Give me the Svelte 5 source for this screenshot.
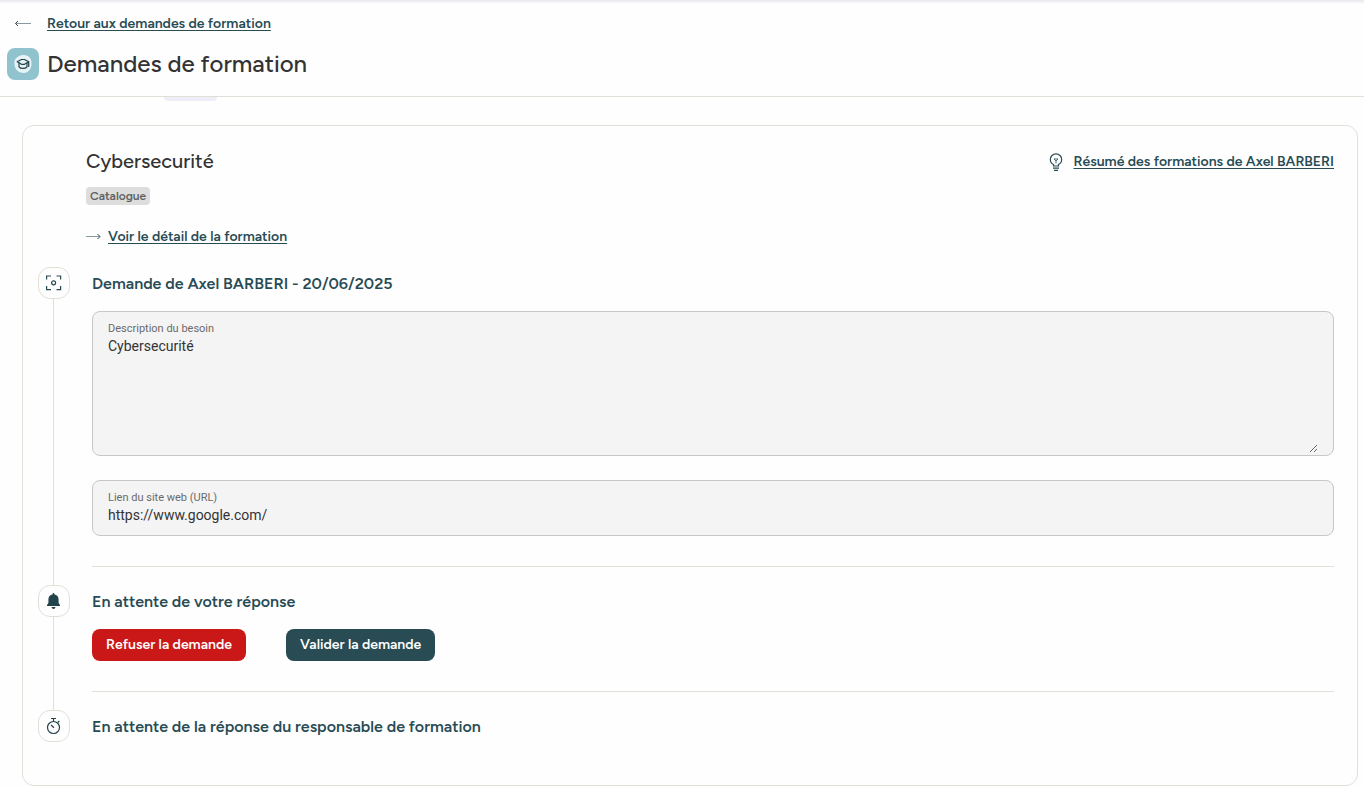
<script lang="ts">
  const person = 'Axel BARBERI';
  const requestDate = '20/06/2025';

  let description = $state('Cybersecurité');
  let url = $state('https://www.google.com/');
</script>

<div class="page">
  <header class="page-header">
    <a class="link back" href="#demandes">
      <svg class="arrow" width="18" height="10" viewBox="0 0 18 10" aria-hidden="true">
        <path d="M1.5 4.500H17" stroke="#8a9a9e" />
        <path d="M4 2L1.5 4.500L4 7" stroke="#284b54" />
      </svg>
      <span>Retour aux demandes de formation</span>
    </a>
    <div class="heading">
      <span class="logo">
        <svg width="20" height="20" viewBox="0 0 20 20" aria-hidden="true">
          <path d="M10 1C15 .7 18.800 4 18.500 9C18.800 14 16 18.500 11 19C5.500 19.200 1.800 15.500 1.500 10C.5 5.500 4.500 1.500 10 1Z" fill="#e6f3f6" />
          <g fill="none" stroke="#22434b" stroke-width="1.200" stroke-linejoin="round" stroke-linecap="round">
            <path d="M4.200 7.800L8.500 5.500H11.500L15.700 7.800L11.500 10.300H8.500Z" />
            <path d="M6 9.200V12.800C7.500 15 12.500 15 14 12.800V9.200M15.700 7.800V12.500" />
          </g>
        </svg>
      </span>
      <h1>Demandes de formation</h1>
    </div>
  </header>

  <main>
    <span class="scrolled-tag"></span>

    <section class="card">
      <div class="card-head">
        <div class="training">
          <h2>Cybersecurité</h2>
          <span class="tag">Catalogue</span>
          <a class="link detail" href="#formation">
            <svg class="arrow" width="15" height="10" viewBox="0 0 15 10" aria-hidden="true">
              <path d="M0 4.500H14" stroke="#8a9a9e" />
              <path d="M11.500 2L14 4.500L11.500 7" stroke="#284b54" />
            </svg>
            <span>Voir le détail de la formation</span>
          </a>
        </div>
        <a class="link summary" href="#resume">
          <svg width="14" height="18" viewBox="0 0 14 18" fill="none" stroke="#284b54" aria-hidden="true">
            <path d="M4.500 13V11.500C2.300 10.500 1.300 8.700 1.300 6.500A5.700 5.700 0 0 1 12.700 6.500C12.700 8.700 11.700 10.500 9.500 11.500V13Z" stroke-width="1.200" />
            <path d="M5 6H9L7 8ZM7 8V10.500" stroke-width=".8" />
            <path d="M4 15.200H10M5 17.400H9" stroke-width="1.200" />
          </svg>
          <span>Résumé des formations de {person}</span>
        </a>
      </div>

      <ol class="steps">
        <li class="step">
          <div class="rail">
            <span class="marker">
              <svg width="16" height="16" viewBox="0 0 16 16" fill="none" stroke="#284b54" stroke-width="1.200" aria-hidden="true">
                <path d="M.6 4.600V1H5M10.500 1H14.600V4.600M14.600 11V14.600H10.500M5 14.600H.6V11" />
                <circle cx="7.600" cy="7.800" r="2" />
              </svg>
            </span>
          </div>
          <div class="body">
            <h3>Demande de {person} - {requestDate}</h3>
            <div class="field">
              <label for="description">Description du besoin</label>
              <textarea id="description" bind:value={description} readonly></textarea>
            </div>
            <div class="field">
              <label for="url">Lien du site web (URL)</label>
              <input id="url" type="text" bind:value={url} readonly />
            </div>
          </div>
        </li>

        <li class="step">
          <div class="rail">
            <span class="marker">
              <svg width="14" height="16" viewBox="0 0 14 16" fill="#22434b" aria-hidden="true">
                <path d="M5.800 0H7.200V1.300C10 1.800 11.600 3.800 11.600 6.500V10L13 12V13H0V12L1.400 10V6.500C1.400 3.800 3 1.800 5.800 1.300Z" />
                <path d="M4.500 14H8.500C8.200 15.300 7.500 16 6.500 16S4.800 15.300 4.500 14Z" />
              </svg>
            </span>
          </div>
          <div class="body">
            <h3>En attente de votre réponse</h3>
            <div class="actions">
              <button type="button" class="btn btn--refuse">Refuser la demande</button>
              <button type="button" class="btn btn--accept">Valider la demande</button>
            </div>
          </div>
        </li>

        <li class="step">
          <div class="rail">
            <span class="marker">
              <svg width="16" height="18" viewBox="0 0 16 18" fill="none" stroke="#22434b" stroke-width="1.200" aria-hidden="true">
                <circle cx="7.500" cy="10.500" r="6" />
                <path d="M5 1.500H10M7.500 1.500V4.500M11.800 5.500L13.300 4M5 8L8 10.800" />
              </svg>
            </span>
          </div>
          <div class="body">
            <h3>En attente de la réponse du responsable de formation</h3>
          </div>
        </li>
      </ol>
    </section>
  </main>
</div>

<style>
  :global(body) {
    background: #fefefe;
  }

  .page {
    --teal: #284b54;
    --ink: #333;
    --line: #e0e0d8;
    font-family: Figtree, Lato, sans-serif;
    font-size: 14px;
    line-height: 20px;
    color: var(--teal);
  }

  h1,
  h2,
  h3 {
    margin: 0;
    font-weight: 500;
  }

  .page-header {
    padding: 14px 7px 16px;
    border-bottom: 1px solid var(--line);
    background: linear-gradient(#e6e8ec, #fefefe) top / 100% 4px no-repeat;
  }

  .link {
    display: flex;
    align-items: center;
    width: fit-content;
    font-weight: 600;
    color: var(--teal);
    text-decoration: none;
  }

  .link span {
    text-decoration: underline;
    text-underline-offset: 2px;
  }

  .arrow {
    fill: none;
  }

  .back {
    gap: 15px;
    padding-left: 7px;
  }

  .heading {
    display: flex;
    align-items: center;
    gap: 8px;
    margin-top: 14px;
  }

  .logo {
    display: flex;
    align-items: center;
    justify-content: center;
    width: 32px;
    height: 32px;
    border-radius: 8px;
    background: #90c3ce;
  }

  h1 {
    font-size: 24px;
    line-height: 32px;
    color: var(--ink);
  }

  main {
    padding: 0 6px 1px 22px;
  }

  .scrolled-tag {
    display: block;
    width: 53px;
    height: 4px;
    margin: 0 0 24px 142px;
    border-radius: 0 0 4px 4px;
    background: #efeef8;
  }

  .card {
    padding: 23px 23px 41px 15px;
    border: 1px solid var(--line);
    border-radius: 12px;
  }

  .card-head {
    display: flex;
    justify-content: space-between;
    align-items: flex-start;
    padding-left: 48px;
  }

  h2 {
    font-size: 20px;
    line-height: 24px;
    color: var(--ink);
  }

  .tag {
    display: block;
    width: fit-content;
    margin: 14px 0 22px;
    padding: 0 4px;
    border-radius: 4px;
    background: #ddd;
    color: #616161;
    font-size: 12px;
    font-weight: 600;
    line-height: 18px;
  }

  .detail {
    gap: 7px;
  }

  .summary {
    gap: 10px;
    padding-top: 3px;
  }

  .steps {
    margin: 20px 0 0;
    padding: 0;
    list-style: none;
  }

  .step {
    display: flex;
    gap: 22px;
  }

  .rail {
    display: flex;
    flex-direction: column;
  }

  .marker {
    display: flex;
    align-items: center;
    justify-content: center;
    box-sizing: border-box;
    width: 32px;
    height: 32px;
    border: 1px solid var(--line);
    border-radius: 12px;
  }

  .step:not(:last-child) .rail::after {
    content: '';
    flex: 1;
    width: 1px;
    margin-left: 15px;
    background: var(--line);
  }

  .body {
    flex: 1;
    min-width: 0;
  }

  .step:not(:last-child) .body {
    margin-bottom: 18px;
    padding-bottom: 30px;
    border-bottom: 1px solid var(--line);
  }

  h3 {
    font-size: 16px;
    font-weight: 600;
    line-height: 34px;
  }

  .field {
    display: flex;
    flex-direction: column;
    margin-top: 10px;
    padding: 10px 15px 2px;
    border: 1px solid #c6c8c8;
    border-radius: 8px;
    background: #f4f4f4;
    font-family: Roboto, sans-serif;
    font-size: 14px;
  }

  .field + .field {
    margin-top: 24px;
    padding-bottom: 10px;
  }

  .field label {
    color: #6b6b6b;
    font-size: 11px;
    line-height: 14px;
  }

  .field textarea,
  .field input {
    padding: 0;
    border: 0;
    outline: 0;
    background: transparent;
    color: var(--ink);
    font: inherit;
    line-height: 20px;
  }

  .field textarea {
    height: 117px;
    resize: vertical;
  }

  .actions {
    display: flex;
    gap: 40px;
    margin-top: 10px;
  }

  .btn {
    height: 32px;
    padding: 0 14px;
    border: 0;
    border-radius: 8px;
    color: #fff;
    font: inherit;
    font-weight: 600;
    cursor: pointer;
  }

  .btn--refuse {
    background: #ca1818;
  }

  .btn--accept {
    background: var(--teal);
  }
</style>
